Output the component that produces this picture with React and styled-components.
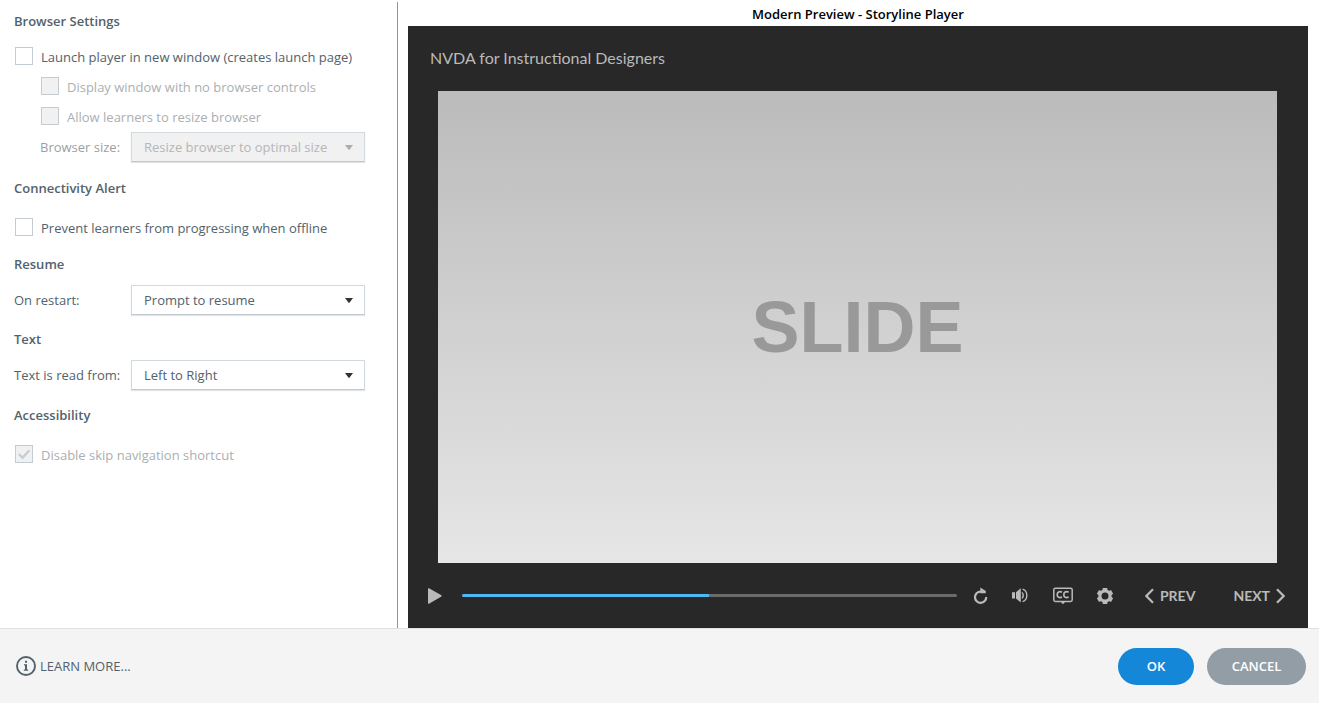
import { useState } from "react";
import styled, { createGlobalStyle } from "styled-components";

const GlobalStyle = createGlobalStyle`
  * {
    box-sizing: border-box;
  }
  body {
    margin: 0;
    background: #fff;
    color: #52626b;
    font-family: "Open Sans", "Noto Sans", sans-serif;
    font-size: 13px;
    line-height: 20px;
  }
  button, select, input {
    font: inherit;
    color: inherit;
  }
`;

const Page = styled.div`
  display: flex;
  flex-direction: column;
  min-height: 100vh;
`;

const Main = styled.main`
  display: flex;
  flex: 1;
`;

const Settings = styled.form`
  flex: 0 0 398px;
  margin-top: 2px;
  padding: 9px 32px 20px 14px;
  border-right: 1px solid #8b979e;
`;

const Section = styled.section`
  margin-bottom: ${(props) => props.$after}px;
`;

const Heading = styled.h2`
  margin: 0 0 ${(props) => (props.$loose ? 15 : 11)}px;
  font-size: 13px;
  font-weight: 600;
`;

const Row = styled.div`
  display: flex;
  align-items: center;
  height: 30px;
  padding-left: ${(props) => (props.$nested ? 26 : 0)}px;
`;

const CheckLabel = styled.label`
  display: flex;
  align-items: center;
  gap: 8px;
  padding-left: 1px;
  color: ${(props) => (props.$disabled ? "#abafb1" : "inherit")};
`;

const CheckBox = styled.span`
  display: grid;
  width: 18px;
  height: 18px;
  margin-bottom: 2px;

  input,
  svg {
    grid-area: 1 / 1;
  }
  input {
    appearance: none;
    width: 18px;
    height: 18px;
    margin: 0;
    border: 1px solid #c2ccd2;
    background: #fff;
  }
  input:disabled {
    background: #f1f1f1;
  }
  svg {
    display: none;
    pointer-events: none;
  }
  input:checked + svg {
    display: block;
  }
`;

const FieldLabel = styled.label`
  flex: 0 0 ${(props) => (props.$nested ? 91 : 117)}px;
  color: ${(props) => (props.$nested ? "#9b9fa2" : "inherit")};
`;

const SelectBox = styled.div`
  display: grid;
  flex: 1;
  align-items: center;

  select,
  svg {
    grid-area: 1 / 1;
  }
  select {
    appearance: none;
    width: 100%;
    height: 30px;
    padding: 0 32px 0 12px;
    border: 1px solid #d3dadf;
    border-bottom-color: #bfc9cf;
    border-radius: 0;
    background: #fff;
    box-shadow: 0 1px 1px #dfe5e8;
  }
  select:disabled {
    background: #f1f1f1;
    color: #b4b6b8;
    opacity: 1;
  }
  svg {
    justify-self: end;
    margin-right: 12px;
    fill: #333;
    pointer-events: none;
  }
  select:disabled + svg {
    fill: #adadad;
  }
`;

const Preview = styled.section`
  display: flex;
  flex: 1;
  flex-direction: column;
  padding: 0 11px 0 10px;
`;

const PreviewTitle = styled.h1`
  margin: 0;
  padding: 4px 0 2px;
  color: #000;
  font-size: 13px;
  font-weight: 600;
  text-align: center;
`;

const Player = styled.div`
  display: flex;
  flex: 1;
  flex-direction: column;
  background: #282828;
  color: #bababa;
  font-family: Lato, sans-serif;
`;

const CourseTitle = styled.h2`
  margin: 0;
  padding: 22px 22px 23px;
  font-size: 16px;
  font-weight: 400;
`;

const Slide = styled.div`
  display: flex;
  flex: 1;
  align-items: center;
  justify-content: center;
  min-height: 200px;
  margin: 0 31px 0 30px;
  background: linear-gradient(#bbb, #e6e6e6);
  color: #999;
  font-family: "Liberation Sans", Arial, sans-serif;
  font-size: 72px;
  font-weight: 700;
  line-height: 80px;
`;

const Controls = styled.div`
  display: flex;
  align-items: center;
  height: 65px;
  padding: 0 23px 0 20px;
`;

const IconGroup = styled.div`
  display: flex;
  gap: 24px;
  margin: 0 32px 0 17px;
`;

const IconButton = styled.button`
  display: flex;
  padding: 0;
  border: 0;
  background: none;

  svg {
    display: block;
  }
`;

const SeekBar = styled.input`
  appearance: none;
  flex: 1;
  min-width: 0;
  height: 3px;
  margin: 0 0 0 20px;
  border-radius: 2px;
  background: linear-gradient(
    90deg,
    #4db8f4 ${(props) => props.value}%,
    #6b6b6b ${(props) => props.value}%
  );

  &::-webkit-slider-thumb {
    appearance: none;
    width: 3px;
    height: 3px;
    background: transparent;
  }
`;

const NavGroup = styled.div`
  display: flex;
  gap: 38px;
`;

const NavButton = styled.button`
  display: flex;
  align-items: center;
  gap: 6px;
  padding: 0;
  border: 0;
  background: none;
  font-size: 14px;
  font-weight: 700;
`;

const Footer = styled.footer`
  display: flex;
  align-items: center;
  justify-content: space-between;
  height: 75px;
  padding: 0 13px 0 16px;
  border-top: 1px solid #dbe1e5;
  background: #f4f4f4;
`;

const LearnMore = styled.a`
  display: flex;
  align-items: center;
  gap: 4px;
  color: inherit;
  text-decoration: none;
`;

const Actions = styled.div`
  display: flex;
  gap: 13px;
`;

const PillButton = styled.button`
  min-width: ${(props) => (props.$primary ? 76 : 99)}px;
  height: 37px;
  padding: 0 16px;
  border: 0;
  border-radius: 19px;
  background: ${(props) => (props.$primary ? "#1487d9" : "#929da5")};
  color: #fff;
  font-weight: 600;
`;

const Check = ({ label, disabled, defaultChecked }) => (
  <CheckLabel $disabled={disabled}>
    <CheckBox>
      <input type="checkbox" disabled={disabled} defaultChecked={defaultChecked} />
      <svg width="18" height="18" viewBox="0 0 18 18">
        <path d="M3.8 9L7.5 12.7L14.4 5.3" fill="none" stroke="#c5ced4" strokeWidth="2.4" />
      </svg>
    </CheckBox>
    {label}
  </CheckLabel>
);

const SelectField = ({ id, label, options, disabled, nested }) => (
  <Row $nested={nested}>
    <FieldLabel htmlFor={id} $nested={nested}>
      {label}
    </FieldLabel>
    <SelectBox>
      <select id={id} disabled={disabled}>
        {options.map((option) => (
          <option key={option}>{option}</option>
        ))}
      </select>
      <svg width="8" height="5" viewBox="0 0 8 5">
        <path d="M0 0h8L4.6 4.6q-.6.6-1.2 0z" />
      </svg>
    </SelectBox>
  </Row>
);

const PlayIcon = () => (
  <svg width="14" height="16" viewBox="0 0 14 16" fill="#bababa">
    <path d="M0 0.6Q0 0 1 0.3L13.4 7.2Q14 8 13.4 8.6L1 15.7Q0 16 0 15.2z" />
  </svg>
);

const ReplayIcon = () => (
  <svg width="14" height="18" viewBox="0 0 14 18" fill="#bababa">
    <path
      d="M12.2 10A5.6 5.6 0 1 1 6.6 4.6H8"
      fill="none"
      stroke="#bababa"
      strokeWidth="2.2"
    />
    <path d="M6.3 0.6L11.8 4V6.2H6.3z" />
  </svg>
);

const VolumeIcon = () => (
  <svg width="17" height="18" viewBox="0 0 17 18" fill="#bababa">
    <path d="M0 5.2H3V11.6H0zM4 5.2L8.8 1.2V15.6L4 11.6z" />
    <path
      d="M10 5.4Q12.5 8.4 10 11.4M10.6 2.2C16.2 4.2 16.2 12.6 10.6 14.6"
      fill="none"
      stroke="#bababa"
      strokeWidth="1.4"
    />
  </svg>
);

const CaptionsIcon = () => (
  <svg width="20" height="18" viewBox="0 0 20 18" fill="none" stroke="#bababa">
    <rect x="0.8" y="1.2" width="18.4" height="13.2" rx="1.6" strokeWidth="1.5" />
    <path d="M7.5 14.6H12.5L10 17.2z" fill="#bababa" stroke="none" />
    <path
      d="M9 5.3C6.3 3.8 4.2 5.4 4.2 7.7S6.3 11.6 9 10.1M15.6 5.3C12.9 3.8 10.8 5.4 10.8 7.7S12.9 11.6 15.6 10.1"
      strokeWidth="1.7"
    />
  </svg>
);

const GearIcon = () => (
  <svg width="16" height="18" viewBox="0 0 16 18" fill="none" stroke="#bababa">
    <circle cx="8" cy="9" r="5.1" strokeWidth="3.2" />
    <path
      d="M8 1V4M8 14V17M0.9 4.9L3.7 6.5M12.3 11.5L15.1 13.1M0.9 13.1L3.7 11.5M12.3 6.5L15.1 4.9"
      strokeWidth="4.6"
    />
  </svg>
);

const Chevron = ({ next }) => (
  <svg width="9" height="16" viewBox="0 0 9 16" fill="none" stroke="#bababa" strokeWidth="2.2">
    <path d={next ? "M1 1.2L7.6 8L1 14.8" : "M8 1.2L1.4 8L8 14.8"} />
  </svg>
);

const InfoIcon = () => (
  <svg width="20" height="20" viewBox="0 0 20 20" fill="#52626b">
    <circle cx="10" cy="10" r="9" fill="none" stroke="#52626b" strokeWidth="1.9" />
    <path d="M9 4.8h2v2H9zM8 8.2h3v5.2h1.2v1.3H7.8v-1.3H9V9.5H8z" />
  </svg>
);

const App = () => {
  const [position, setPosition] = useState(50);

  return (
    <Page>
      <GlobalStyle />
      <Main>
        <Settings>
          <Section $after={16}>
            <Heading>Browser Settings</Heading>
            <Row>
              <Check label="Launch player in new window (creates launch page)" />
            </Row>
            <Row $nested>
              <Check label="Display window with no browser controls" disabled />
            </Row>
            <Row $nested>
              <Check label="Allow learners to resize browser" disabled />
            </Row>
            <SelectField
              id="browser-size"
              label="Browser size:"
              options={["Resize browser to optimal size"]}
              disabled
              nested
            />
          </Section>
          <Section $after={11}>
            <Heading $loose>Connectivity Alert</Heading>
            <Row>
              <Check label="Prevent learners from progressing when offline" />
            </Row>
          </Section>
          <Section $after={14}>
            <Heading>Resume</Heading>
            <SelectField
              id="restart"
              label="On restart:"
              options={["Prompt to resume", "Always resume", "Never resume"]}
            />
          </Section>
          <Section $after={15}>
            <Heading>Text</Heading>
            <SelectField
              id="direction"
              label="Text is read from:"
              options={["Left to Right", "Right to Left"]}
            />
          </Section>
          <Section $after={0}>
            <Heading $loose>Accessibility</Heading>
            <Row>
              <Check label="Disable skip navigation shortcut" disabled defaultChecked />
            </Row>
          </Section>
        </Settings>
        <Preview>
          <PreviewTitle>Modern Preview - Storyline Player</PreviewTitle>
          <Player>
            <CourseTitle>NVDA for Instructional Designers</CourseTitle>
            <Slide>SLIDE</Slide>
            <Controls>
              <IconButton aria-label="Play">
                <PlayIcon />
              </IconButton>
              <SeekBar
                type="range"
                aria-label="Slide progress"
                value={position}
                onChange={(e) => setPosition(e.target.value)}
              />
              <IconGroup>
                <IconButton aria-label="Replay">
                  <ReplayIcon />
                </IconButton>
                <IconButton aria-label="Volume">
                  <VolumeIcon />
                </IconButton>
                <IconButton aria-label="Captions">
                  <CaptionsIcon />
                </IconButton>
                <IconButton aria-label="Settings">
                  <GearIcon />
                </IconButton>
              </IconGroup>
              <NavGroup>
                <NavButton>
                  <Chevron />
                  PREV
                </NavButton>
                <NavButton>
                  NEXT
                  <Chevron next />
                </NavButton>
              </NavGroup>
            </Controls>
          </Player>
        </Preview>
      </Main>
      <Footer>
        <LearnMore href="#learn-more">
          <InfoIcon />
          LEARN MORE...
        </LearnMore>
        <Actions>
          <PillButton $primary>OK</PillButton>
          <PillButton>CANCEL</PillButton>
        </Actions>
      </Footer>
    </Page>
  );
};

export default App;
